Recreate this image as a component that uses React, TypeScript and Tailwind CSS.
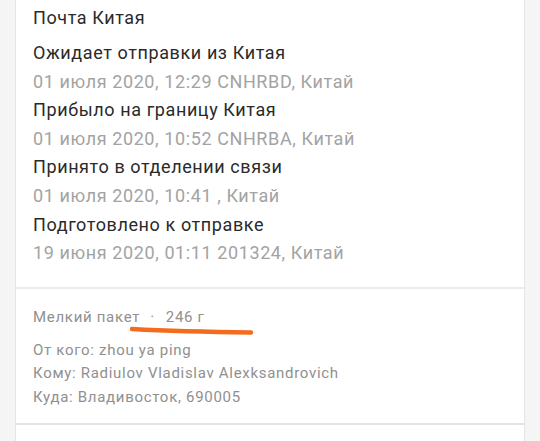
const events = [
	{ title: "Ожидает отправки из Китая", info: "01 июля 2020, 12:29 CNHRBD, Китай" },
	{ title: "Прибыло на границу Китая", info: "01 июля 2020, 10:52 CNHRBA, Китай" },
	{ title: "Принято в отделении связи", info: "01 июля 2020, 10:41 , Китай" },
	{ title: "Подготовлено к отправке", info: "19 июня 2020, 01:11 201324, Китай" },
]

export default function App() {
	return (
		<div
			className="w-[540px] h-[441px] overflow-hidden bg-[#f5f5f5] flex"
			style={{ fontFamily: "Roboto, 'Liberation Sans', sans-serif" }}
		>
			<div className="ml-[15px] w-[510px] h-full bg-white border-x border-[#e4e4e4] flex flex-col">
				<div className="px-[17px] pt-[5px] pb-[19px] border-b-2 border-[#ebebeb] text-[18px] tracking-[0.6px]">
					<div className="leading-[26px] text-[#2a2a2a]">Почта Китая</div>
					<div className="mt-[8px]">
						{events.map((e) => (
							<div key={e.title}>
								<div className="leading-[28.6px] text-[#2a2a2a]">{e.title}</div>
								<div className="leading-[28.6px] text-[#a3a3a3]">{e.info}</div>
							</div>
						))}
					</div>
				</div>
				<div className="px-[17px] pt-[17px] pb-[14px] border-b-2 border-[#e4e4e4] text-[15px] tracking-[0.7px] text-[#909090]">
					<div className="relative leading-[23px]">
						Мелкий пакет<span className="ml-[10px] mr-[11px]">·</span>246 г
						<svg
							className="absolute left-[97px] top-[20px]"
							width="124"
							height="10"
							viewBox="0 0 124 10"
						>
							<path
								d="M2 3 C 30 4.5, 80 6, 121 6.5"
								stroke="#f46b1e"
								strokeWidth="4.5"
								strokeLinecap="round"
								fill="none"
							/>
						</svg>
					</div>
					<div className="mt-[10px] leading-[23.5px]">
						<div>От кого: zhou ya ping</div>
						<div>Кому: Radiulov Vladislav Alexksandrovich</div>
						<div>Куда: Владивосток, 690005</div>
					</div>
				</div>
			</div>
		</div>
	)
}
